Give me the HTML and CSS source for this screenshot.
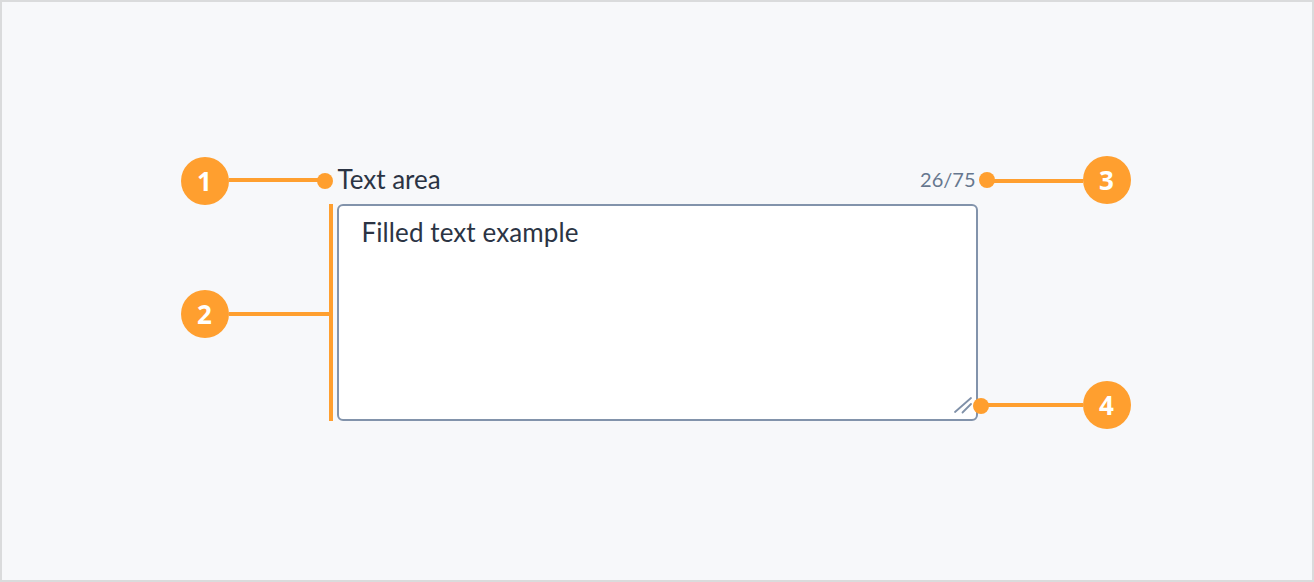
FILE: index.html
```html
<!DOCTYPE html>
<html lang="en">
<head>
<meta charset="utf-8">
<title>Text area anatomy</title>
<link rel="stylesheet" href="styles.css">
</head>
<body>
<div class="frame">
  <div class="field">
    <div class="field-head">
      <span class="field-label">Text area</span>
      <span class="field-count">26/75</span>
    </div>
    <div class="field-box">
      <span class="field-value">Filled text example</span>
      <svg class="grip" width="20" height="20" viewBox="0 0 20 20" aria-hidden="true">
        <line x1="2" y1="16" x2="18" y2="2"/>
        <line x1="9.5" y1="16.5" x2="18" y2="8"/>
      </svg>
    </div>

    <span class="badge badge-1">1</span>
    <span class="line line-1"></span>
    <span class="dot dot-1"></span>

    <span class="badge badge-2">2</span>
    <span class="line line-2"></span>
    <span class="bar"></span>

    <span class="dot dot-3"></span>
    <span class="line line-3"></span>
    <span class="badge badge-3">3</span>

    <span class="dot dot-4"></span>
    <span class="line line-4"></span>
    <span class="badge badge-4">4</span>
  </div>
</div>
</body>
</html>
```
FILE: styles.css
```css
html, body {
  margin: 0;
  padding: 0;
}
body {
  font-family: "Lato", "Noto Sans", sans-serif;
  color: #2b3444;
}
.frame {
  box-sizing: border-box;
  width: 1314px;
  height: 582px;
  border: 2px solid #dadbdc;
  background: #f7f8fa;
  display: flex;
  justify-content: center;
  align-items: flex-start;
  padding-top: 161px;
}
.field {
  position: relative;
  width: 641px;
}
.field-head {
  display: flex;
  justify-content: space-between;
  align-items: center;
  height: 32px;
  margin-bottom: 9px;
}
.field-label {
  font-size: 26px;
  line-height: 32px;
  padding-left: 1px;
}
.field-count {
  font-size: 20px;
  line-height: 32px;
  color: #66778e;
  margin-right: 2px;
}
.field-box {
  position: relative;
  box-sizing: border-box;
  height: 217px;
  border: 2px solid #8293ab;
  border-radius: 6px;
  background: #ffffff;
  padding: 10px 23px;
}
.field-value {
  font-size: 26px;
  line-height: 32px;
  letter-spacing: 0.1px;
}
.grip {
  position: absolute;
  right: 3px;
  bottom: 3px;
  stroke: #7f90a8;
  stroke-width: 1.8;
  stroke-linecap: round;
}
.badge {
  position: absolute;
  width: 48px;
  height: 48px;
  border-radius: 50%;
  background: #ff9f2f;
  color: #ffffff;
  font-family: "Noto Sans", sans-serif;
  font-weight: 700;
  font-size: 26px;
  line-height: 48px;
  text-align: center;
}
.line {
  position: absolute;
  height: 4px;
  background: #ff9f2f;
}
.dot {
  position: absolute;
  width: 16px;
  height: 16px;
  border-radius: 50%;
  background: #ff9f2f;
}
.bar {
  position: absolute;
  left: -8px;
  top: 41px;
  width: 4px;
  height: 217px;
  background: #ff9f2f;
}
.badge-1 { left: -156px; top: -6px; }
.line-1 { left: -108px; top: 15px; width: 96px; }
.dot-1 { left: -20px; top: 10px; }

.badge-2 { left: -156px; top: 127px; }
.line-2 { left: -108px; top: 149px; width: 100px; }

.dot-3 { left: 642px; top: 9px; }
.line-3 { left: 650px; top: 16px; width: 96px; }
.badge-3 { left: 746px; top: -7px; }

.dot-4 { left: 636px; top: 235px; }
.line-4 { left: 644px; top: 240px; width: 102px; }
.badge-4 { left: 746px; top: 218px; }
```
